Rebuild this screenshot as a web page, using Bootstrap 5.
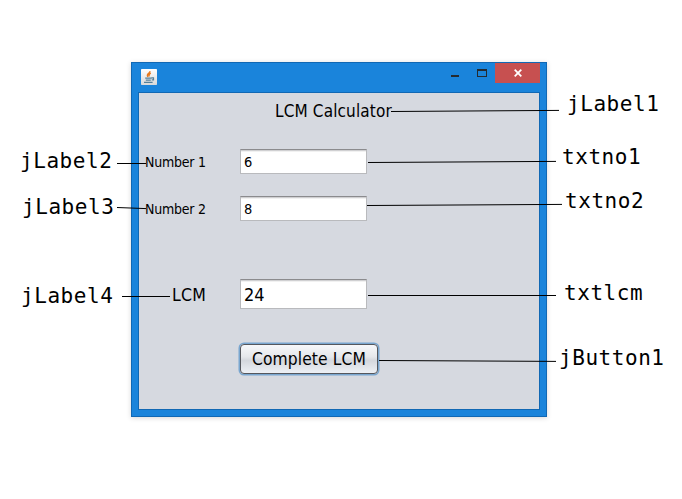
<!DOCTYPE html>
<html lang="en">
<head>
<meta charset="utf-8">
<meta name="viewport" content="width=device-width, initial-scale=1">
<title>LCM Calculator</title>
<link href="https://cdn.jsdelivr.net/npm/bootstrap@5.3.0/dist/css/bootstrap.min.css" rel="stylesheet">
<style>
body{width:682px;height:499px;overflow:hidden;background:#fff;padding:62px 0 0 131px;color:#000;font-family:"DejaVu Sans Condensed","DejaVu Sans",sans-serif;font-stretch:condensed}
.app-window{width:416px;height:355px;background:#1a84db;border:1px solid #1168b4;box-shadow:0 1px 5px rgba(0,0,0,.16)}
.title-bar{height:29px;padding:0 6px 0 9px}
.java-icon{margin-top:6px}
.win-controls{height:21px}
.min-btn{width:8px;height:2px;background:#252b30;margin-top:12px}
.max-btn{width:10px;height:8px;border:1px solid #252b30;border-top-width:2px;margin:6px 8px 0 18px}
.close-btn{width:45px;height:20px;background:#c75050}
.client{width:402px;height:318px;margin-left:6px;background:#d6d9e0;border:1px solid #1168b4}
.heading{height:56px;padding:5px 0 0 136px;font-size:17px;line-height:26px;letter-spacing:.14px}
.field-row{height:25px}
.field-name{width:101px;padding:2px 0 0 6px;font-size:14px;letter-spacing:-.22px}
.big .field-name{font-size:17.5px;padding:3px 0 0 33px;letter-spacing:.2px}
.text-field{width:127px;height:25px;padding:0 0 0 3px;border:1px solid #b9babd;border-top:1px solid #8b8b8e;border-radius:0;background:#fff;box-shadow:inset 0 1px #d0d0d2,inset 0 2px #f1f1f1;font-size:14.5px;color:#000;line-height:22px}
.big,.big .text-field{height:30px}
.big .text-field{font-size:18px}
.swing-btn,.swing-btn:hover{width:138px;height:30px;margin:35px 0 0 101px;padding:0;border:1px solid #55575d;border-radius:4px;box-shadow:0 0 0 1.5px #79a6cf;background:linear-gradient(#f7f8fa,#e5e7eb 42%,#d4d7dd 55%,#edf0f5);font-size:17.3px;line-height:29px;letter-spacing:.1px;color:#000}
.callout{position:absolute;font:21px/28px "DejaVu Sans Mono",monospace;letter-spacing:.55px;white-space:nowrap;color:#000}
.leaders{position:absolute;left:0;top:0;pointer-events:none}
</style>
</head>
<body>
<main class="app-window">
  <div class="title-bar d-flex justify-content-between align-items-start">
    <svg class="java-icon" width="16" height="16" viewBox="0 0 16 16" aria-hidden="true">
      <defs><linearGradient id="tile" x2="0" y2="1"><stop stop-color="#fff"/><stop offset="1" stop-color="#d8d8d8"/></linearGradient></defs>
      <rect width="16" height="16" rx=".7" fill="url(#tile)"/>
      <path d="M8.9 2.2c.5 2.2-4.2 2.6-2 5.6M9.8 4.2c-2.3 1-1.6 1.8-1.8 3.2" fill="none" stroke="#e8791d" stroke-width="1.4"/>
      <path d="M4.2 9.2h6.4M4.8 11.2h5M3 13.4h8.6M10.5 8.9h2v1.9h-1.8" fill="none" stroke="#55809a" stroke-width="1.2"/>
    </svg>
    <div class="win-controls d-flex align-items-start">
      <div class="min-btn"></div><div class="max-btn"></div>
      <div class="close-btn d-flex align-items-center justify-content-center">
        <svg width="8" height="8" viewBox="0 0 8 8"><path d="M.7.7l6.6 6.6M7.3.7L.7 7.3" stroke="#fff" stroke-width="1.8"/></svg>
      </div>
    </div>
  </div>
  <section class="client">
    <div class="heading">LCM Calculator</div>
    <div class="field-row d-flex align-items-center"><label class="field-name" for="n1">Number 1</label><input id="n1" class="form-control text-field" value="6"></div>
    <div class="field-row d-flex align-items-center" style="margin-top:22px"><label class="field-name" for="n2">Number 2</label><input id="n2" class="form-control text-field" value="8"></div>
    <div class="field-row big d-flex align-items-center" style="margin-top:58px"><label class="field-name" for="lcm">LCM</label><input id="lcm" class="form-control text-field" value="24"></div>
    <button class="btn swing-btn d-block" type="button">Complete LCM</button>
  </section>
</main>
<svg class="leaders" width="682" height="499" viewBox="0 0 682 499" stroke="#000" stroke-width="1">
  <path d="M391 111.5L559 110.4M117 163.5H146M117 207.5L146 208.6M122 296.5H170M368 162.5L556 161.4M367 205.5L562 204.4M368 295.5H556M379 360.5L556 361.4"/>
</svg>
<div class="callout" style="left:20px;top:147px">jLabel2</div>
<div class="callout" style="left:22px;top:193px">jLabel3</div>
<div class="callout" style="left:21px;top:282px">jLabel4</div>
<div class="callout" style="left:567px;top:90px">jLabel1</div>
<div class="callout" style="left:562px;top:143px">txtno1</div>
<div class="callout" style="left:565px;top:187px">txtno2</div>
<div class="callout" style="left:564px;top:279px">txtlcm</div>
<div class="callout" style="left:559px;top:344px">jButton1</div>
<script src="https://cdn.jsdelivr.net/npm/bootstrap@5.3.0/dist/js/bootstrap.bundle.min.js"></script>
</body>
</html>
